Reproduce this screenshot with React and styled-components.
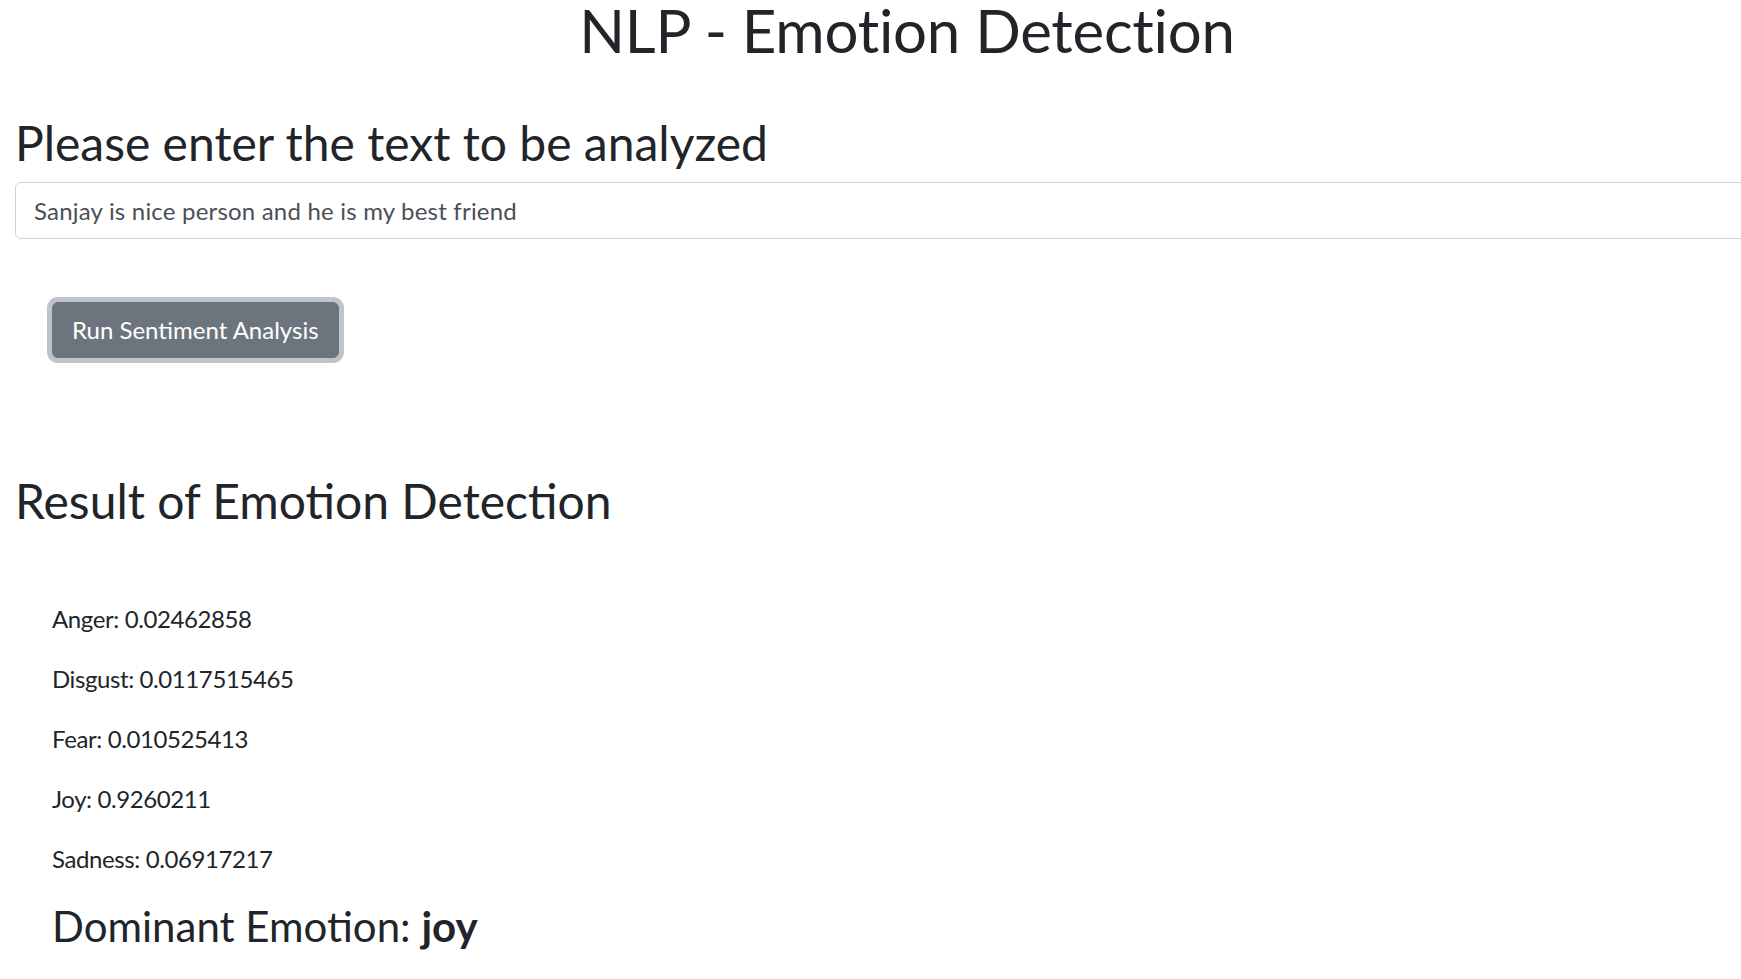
import React, { useState } from "react";
import styled, { createGlobalStyle } from "styled-components";

const scores = [
  ["Anger", "0.02462858"],
  ["Disgust", "0.0117515465"],
  ["Fear", "0.010525413"],
  ["Joy", "0.9260211"],
  ["Sadness", "0.06917217"],
];

const App = () => {
  const [text, setText] = useState("Sanjay is nice person and he is my best friend");

  return (
    <>
      <GlobalStyle />
      <Page>
        <Title>NLP - Emotion Detection</Title>
        <Heading $top={54}>Please enter the text to be analyzed</Heading>
        <TextInput
          type="text"
          value={text}
          onChange={(e) => setText(e.target.value)}
        />
        <ButtonRow>
          <RunButton type="button">Run Sentiment Analysis</RunButton>
        </ButtonRow>
        <Heading $top={114}>Result of Emotion Detection</Heading>
        <Results>
          {scores.map(([name, value]) => (
            <Score key={name}>
              {name}: {value}
            </Score>
          ))}
          <Dominant>
            Dominant Emotion: <b>joy</b>
          </Dominant>
        </Results>
      </Page>
    </>
  );
};
export default App;

const GlobalStyle = createGlobalStyle`
  html, body {
    margin: 0;
    padding: 0;
    background: #fff;
    overflow-x: hidden;
  }
  body {
    font-family: Lato, "Open Sans", sans-serif;
    color: #212529;
  }
`;

// the form is wider than the window, as in the original page
const Page = styled.div`
  width: 1784px;
  padding: 0 0 0 15px;
  display: flex;
  flex-direction: column;
`;

const Title = styled.h1`
  align-self: center;
  margin: 0;
  font-size: 60px;
  font-weight: 400;
  line-height: 60px;
  letter-spacing: -0.25px;
`;

const Heading = styled.h2`
  margin: ${(p) => p.$top}px 0 0;
  font-size: 48px;
  font-weight: 400;
  line-height: 1.2;
`;

const TextInput = styled.input`
  box-sizing: border-box;
  margin-top: 10px;
  width: 100%;
  height: 57px;
  padding: 0 18px;
  border: 1.5px solid #ced4da;
  border-radius: 6px;
  font-family: inherit;
  font-size: 24px;
  letter-spacing: 0.2px;
  color: #495057;
  outline: none;
`;

const ButtonRow = styled.div`
  display: flex;
  margin-top: 63px;
  padding-left: 37px;
`;

const RunButton = styled.button`
  height: 56px;
  padding: 0 19px;
  border: 1.5px solid #6c757d;
  border-radius: 6px;
  background: #6c757d;
  color: #fff;
  font-family: inherit;
  font-size: 24px;
  box-shadow: 0 0 0 5px rgba(130, 138, 145, 0.5);
  cursor: pointer;
`;

const Results = styled.div`
  margin-top: 72px;
  padding-left: 37px;
`;

const Score = styled.p`
  margin: 0 0 24px;
  font-size: 24px;
  line-height: 36px;
  letter-spacing: -0.4px;
`;

const Dominant = styled.h3`
  margin: 0;
  font-size: 42px;
  font-weight: 400;
  line-height: 1.2;
  b {
    font-weight: 700;
  }
`;
